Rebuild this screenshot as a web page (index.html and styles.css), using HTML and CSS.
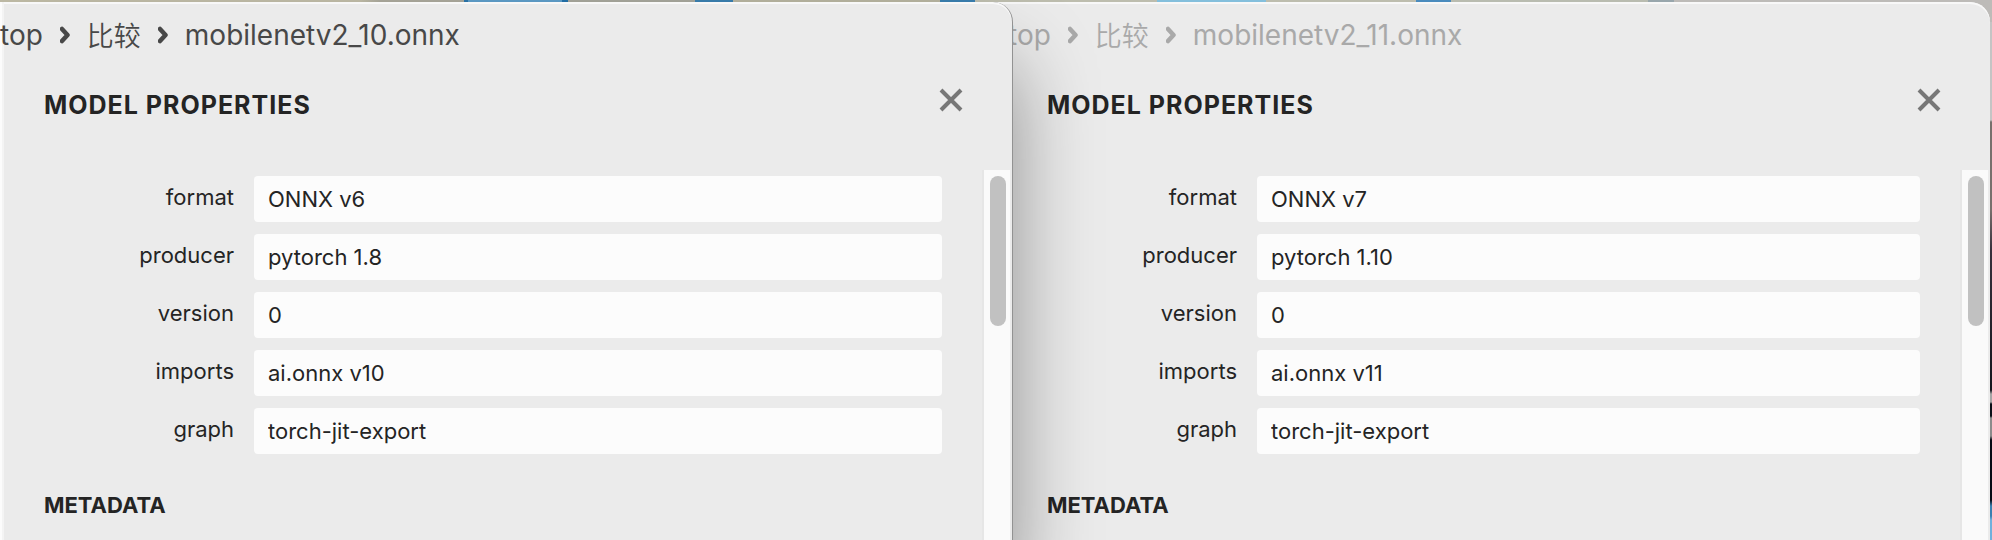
FILE: index.html
```html
<!DOCTYPE html>
<html lang="en">
<head>
<meta charset="utf-8">
<title>Model Properties</title>
<link rel="stylesheet" href="styles.css">
</head>
<body>
<main class="desktop">
  <section class="window window-front">
    <nav class="crumbs" aria-label="Path">
      <span>top</span>
      <svg class="chevron" viewBox="0 0 10 18" aria-hidden="true"><path d="M2 3 7.5 9 2 15"/></svg>
      <span class="cjk" lang="zh">比较</span>
      <svg class="chevron" viewBox="0 0 10 18" aria-hidden="true"><path d="M2 3 7.5 9 2 15"/></svg>
      <span>mobilenetv2_10.onnx</span>
    </nav>
    <header class="head">
      <h1 class="title">MODEL PROPERTIES</h1>
      <button class="close" type="button" aria-label="Close"><svg viewBox="0 0 24 24" aria-hidden="true"><path d="M2 2 22 22M22 2 2 22"/></svg></button>
    </header>
    <div class="body">
      <form class="content">
        <div class="row"><label class="name" for="a1">format</label><input class="value" id="a1" value="ONNX v6" readonly></div>
        <div class="row"><label class="name" for="a2">producer</label><input class="value" id="a2" value="pytorch 1.8" readonly></div>
        <div class="row"><label class="name" for="a3">version</label><input class="value" id="a3" value="0" readonly></div>
        <div class="row"><label class="name" for="a4">imports</label><input class="value" id="a4" value="ai.onnx v10" readonly></div>
        <div class="row"><label class="name" for="a5">graph</label><input class="value" id="a5" value="torch-jit-export" readonly></div>
        <h2 class="subtitle">METADATA</h2>
      </form>
      <div class="track"><div class="thumb"></div></div>
    </div>
  </section>
  <section class="window window-back">
    <nav class="crumbs" aria-label="Path">
      <span>top</span>
      <svg class="chevron" viewBox="0 0 10 18" aria-hidden="true"><path d="M2 3 7.5 9 2 15"/></svg>
      <span class="cjk" lang="zh">比较</span>
      <svg class="chevron" viewBox="0 0 10 18" aria-hidden="true"><path d="M2 3 7.5 9 2 15"/></svg>
      <span>mobilenetv2_11.onnx</span>
    </nav>
    <header class="head">
      <h1 class="title">MODEL PROPERTIES</h1>
      <button class="close" type="button" aria-label="Close"><svg viewBox="0 0 24 24" aria-hidden="true"><path d="M2 2 22 22M22 2 2 22"/></svg></button>
    </header>
    <div class="body">
      <form class="content">
        <div class="row"><label class="name" for="b1">format</label><input class="value" id="b1" value="ONNX v7" readonly></div>
        <div class="row"><label class="name" for="b2">producer</label><input class="value" id="b2" value="pytorch 1.10" readonly></div>
        <div class="row"><label class="name" for="b3">version</label><input class="value" id="b3" value="0" readonly></div>
        <div class="row"><label class="name" for="b4">imports</label><input class="value" id="b4" value="ai.onnx v11" readonly></div>
        <div class="row"><label class="name" for="b5">graph</label><input class="value" id="b5" value="torch-jit-export" readonly></div>
        <h2 class="subtitle">METADATA</h2>
      </form>
      <div class="track"><div class="thumb"></div></div>
    </div>
  </section>
</main>
</body>
</html>
```
FILE: styles.css
```css
* {
  box-sizing: border-box;
}

body {
  margin: 0;
  overflow: hidden;
  font-family: Inter, "Noto Sans CJK SC", sans-serif;
  font-size: 22px;
  color: #242424;
}

/* Wallpaper showing above and to the right of the windows */
.desktop {
  display: grid;
  grid-template-columns: 1013fr 977fr;
  height: 100vh;
  padding: 2px 2px 0 0;
  background:
    linear-gradient(#bdbbb8 0 22px, #c4c4c4 22px 120px, #77706c 122px 210px, #37303c 250px, #14161d 390px, #a5a5a5 394px 402px, #0a1018 404px 416px, #8b8b8b 418px 436px, #050a14 440px 500px, #3a7fb0 506px 516px, #6fb0dc 520px) right / 2px 100% no-repeat,
    linear-gradient(90deg, #bfbba6 0 360px, #a9a79b 380px 464px, #2b74a8 464px 468px, #5d9cc7 468px 562px, #2270a8 562px 568px, #a5a59b 568px 695px, #3a7eae 695px 733px, #b6b39f 733px 940px, #3a7eae 940px 975px, #bdbdae 975px 1157px, #84bfdc 1157px 1266px, #bdbdae 1266px 1416px, #4a8bbd 1416px 1451px, #b9bcb0 1451px 1648px, #98a6ac 1648px 1674px, #bdbbb8 1674px);
}

.window {
  position: relative;
  display: flex;
  flex-direction: column;
  min-width: 0;
  background: #ebebeb;
  border-radius: 0 20px 0 0;
}

.window-front {
  z-index: 1;
  border-right: 1px solid #929292;
  box-shadow: inset 2px 0 #fcfcfc, inset 4px 0 #f4f4f4, inset 0 2px #f8f8f8, 0 60px 84px rgba(0, 0, 0, 0.4);
}

/* Runs under the rounded corner of the front window */
.window-back {
  margin-left: -24px;
  padding-left: 24px;
  box-shadow: inset 0 2px #f8f8f8;
}

.crumbs {
  display: flex;
  align-items: center;
  height: 66px;
  font-size: 28px;
  color: #484848;
  white-space: nowrap;
}

.window-back .crumbs {
  margin-left: -5px;
  color: #a9a9a9;
}

.cjk {
  font-family: "Noto Sans CJK SC", sans-serif;
  font-size: 27px;
  font-weight: 350;
  line-height: 30px;
}

.chevron {
  flex: none;
  width: 10px;
  height: 18px;
  margin: 0 17px;
  fill: none;
  stroke: currentColor;
  stroke-width: 4.5;
  stroke-linecap: round;
  stroke-linejoin: round;
}

.head {
  display: flex;
  justify-content: space-between;
  height: 102px;
  padding: 19px 48px 0 44px;
}

.window-back .head {
  padding-left: 34px;
}

.title {
  margin: 0;
  padding-top: 3px;
  font-size: 25px;
  font-weight: 700;
  line-height: 30px;
  letter-spacing: 1px;
}

.close {
  width: 26px;
  height: 26px;
  padding: 1px;
  border: 0;
  background: none;
}

.close svg {
  display: block;
  width: 24px;
  height: 24px;
  stroke: #777;
  stroke-width: 4;
}

.body {
  display: flex;
  flex: 1;
  padding-right: 2px;
}

.content {
  flex: 1;
  min-width: 0;
  padding: 6px 40px 0 44px;
}

.window-back .content {
  padding-left: 34px;
}

.row {
  display: grid;
  grid-template-columns: 190px 1fr;
  column-gap: 20px;
  margin-bottom: 12px;
}

.name {
  padding-top: 6px;
  line-height: 30px;
  text-align: right;
}

.value {
  width: 100%;
  height: 46px;
  padding: 0 14px;
  border: 0;
  border-radius: 4px;
  background: #fcfcfc;
  color: inherit;
  font: inherit;
  outline: 0;
}

.subtitle {
  margin: 36px 0 0;
  font-size: 22px;
  font-weight: 700;
  line-height: 30px;
}

.track {
  width: 28px;
  padding: 6px 4px 0 6px;
  border-left: 2px solid #e6e6e6;
  background: #fafafa;
}

.thumb {
  height: 150px;
  border-radius: 8px;
  background: #c1c1c1;
}
```
